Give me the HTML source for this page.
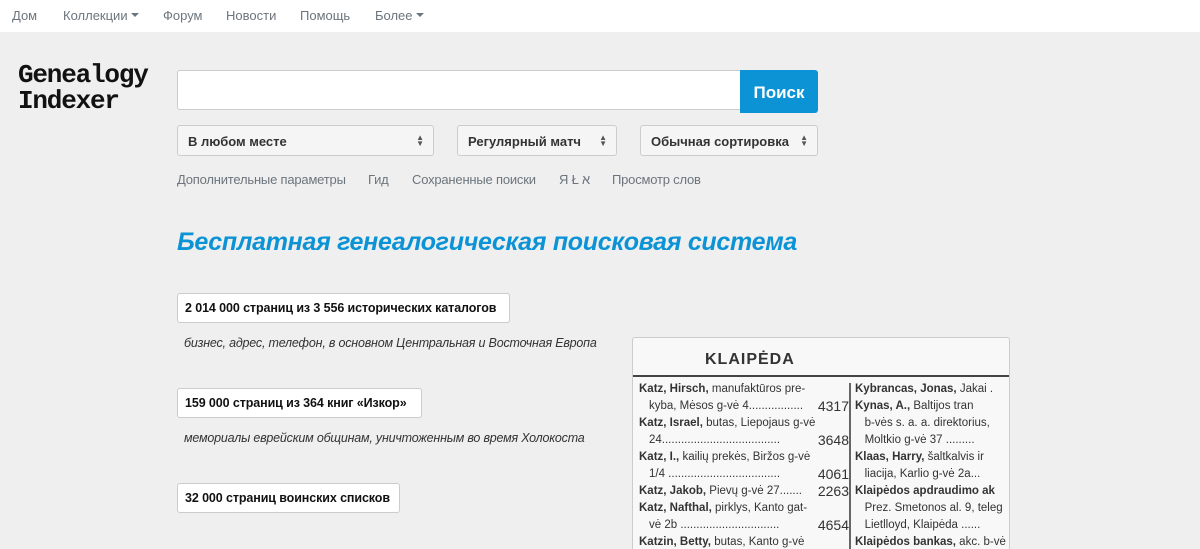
<!DOCTYPE html>
<html><head><meta charset="utf-8"><style>
*{box-sizing:border-box;margin:0;padding:0}
html,body{width:1200px;height:549px;overflow:hidden}
body{background:#efefef;font-family:"Liberation Sans",sans-serif;position:relative}
.nav{position:absolute;left:0;top:0;width:1200px;height:32px;background:#fff}
.nav span{position:absolute;top:8px;font-size:13px;color:#6c757d}
.car{display:inline-block;width:0;height:0;border-left:4px solid transparent;border-right:4px solid transparent;border-top:4px solid #6c757d;vertical-align:3px;margin-left:3px}
.logo{position:absolute;left:18px;top:62px;font-family:"Liberation Mono",monospace;font-size:26px;line-height:26px;color:#111;font-weight:bold;letter-spacing:-1.2px}
.search{position:absolute;left:177px;top:70px;width:564px;height:40px;background:#fff;border:1px solid #ccc;border-radius:3px 0 0 3px}
.btn{position:absolute;left:740px;top:70px;width:78px;height:43px;background:#0b93d5;color:#fff;font-weight:bold;font-size:17px;text-align:center;line-height:46px;border-radius:0 3px 3px 0}
.sel{position:absolute;top:125px;height:31px;border:1px solid #ccc;border-radius:3px;background:#f5f5f5;font-size:13px;font-weight:bold;color:#333;padding:8px 10px}
.sel i{position:absolute;right:9px;top:9px;font-style:normal;font-size:8px;line-height:6px;color:#555}
.links span{position:absolute;top:172px;font-size:13px;color:#6c757d;letter-spacing:-0.2px}
h1{position:absolute;left:177px;top:228px;font-size:25px;font-style:italic;font-weight:bold;color:#0b93d5;letter-spacing:-0.3px}
.b{position:absolute;left:177px;height:30px;background:#fff;border:1px solid #ccc;border-radius:3px;font-size:12.5px;font-weight:bold;color:#111;padding:7px 7px;white-space:nowrap;letter-spacing:-0.1px}
.d{position:absolute;left:184px;font-size:12.5px;font-style:italic;color:#333;letter-spacing:-0.2px}
.img{position:absolute;left:632px;top:337px;width:378px;height:212px;background:#f8f8f8;border:1px solid #ccc;border-bottom:none;border-radius:3px 3px 0 0;overflow:hidden;font-size:11.5px;color:#333;line-height:17px}
.img .t{position:absolute;left:72px;top:13px;font-weight:bold;font-size:16px;letter-spacing:1px;color:#333}
.img .hr{position:absolute;left:0;top:37px;width:378px;height:2px;background:#444}
.img .c1{position:absolute;left:6px;top:43px;width:210px;white-space:nowrap;overflow:hidden}
.img .c2{position:absolute;left:222px;top:43px;white-space:nowrap}
.img .vl{position:absolute;left:216px;top:45px;width:2px;height:180px;background:#666}
.img .c1 div,.img .c2 div{height:17px;overflow:hidden}
.img .r{display:flex;justify-content:space-between;padding-left:10px}
.img .r em{font-style:normal;font-size:14px;line-height:17px}
</style></head><body>
<div class="nav">
<span style="left:12px">Дом</span>
<span style="left:63px">Коллекции<b class="car"></b></span>
<span style="left:163px">Форум</span>
<span style="left:226px">Новости</span>
<span style="left:300px">Помощь</span>
<span style="left:375px">Более<b class="car"></b></span>
</div>
<div class="logo">Genealogy<br>Indexer</div>
<div class="search"></div>
<div class="btn">Поиск</div>
<div class="sel" style="left:177px;width:257px">В любом месте<i>▲<br>▼</i></div>
<div class="sel" style="left:457px;width:160px">Регулярный матч<i>▲<br>▼</i></div>
<div class="sel" style="left:640px;width:178px">Обычная сортировка<i>▲<br>▼</i></div>
<div class="links">
<span style="left:177px">Дополнительные параметры</span>
<span style="left:368px">Гид</span>
<span style="left:412px">Сохраненные поиски</span>
<span style="left:559px">Я Ł א</span>
<span style="left:612px">Просмотр слов</span>
</div>
<h1>Бесплатная генеалогическая поисковая система</h1>
<div class="b" style="top:293px;width:333px">2 014 000 страниц из 3 556 исторических каталогов</div>
<div class="d" style="top:336px">бизнес, адрес, телефон, в основном Центральная и Восточная Европа</div>
<div class="b" style="top:388px;width:245px">159 000 страниц из 364 книг «Изкор»</div>
<div class="d" style="top:431px">мемориалы еврейским общинам, уничтоженным во время Холокоста</div>
<div class="b" style="top:483px;width:223px">32 000 страниц воинских списков</div>
<div class="img">
<div class="t">KLAIPĖDA</div><div class="hr"></div><div class="vl"></div>
<div class="c1">
<div><b>Katz, Hirsch,</b> manufaktūros pre-</div>
<div class="r"><span>kyba, Mėsos g-vė 4.................</span><em>4317</em></div>
<div><b>Katz, Israel,</b> butas, Liepojaus g-vė</div>
<div class="r"><span>24.....................................</span><em>3648</em></div>
<div><b>Katz, I.,</b> kailių prekės, Biržos g-vė</div>
<div class="r"><span>1/4 ...................................</span><em>4061</em></div>
<div class="r" style="padding:0"><span><b>Katz, Jakob,</b> Pievų g-vė 27.......</span><em>2263</em></div>
<div><b>Katz, Nafthal,</b> pirklys, Kanto gat-</div>
<div class="r"><span>vė 2b ...............................</span><em>4654</em></div>
<div><b>Katzin, Betty,</b> butas, Kanto g-vė</div>
<div class="r"><span>28.....................................</span><em>3638</em></div>
<div><b>Katzke, Gustav,</b> šaltkalvis ir svar-</div>
</div>
<div class="c2">
<div><b>Kybrancas, Jonas,</b> Jakai .</div>
<div><b>Kynas, A.,</b> Baltijos tran</div>
<div>&nbsp;&nbsp;&nbsp;b-vės s. a. a. direktorius,</div>
<div>&nbsp;&nbsp;&nbsp;Moltkio g-vė 37 .........</div>
<div><b>Klaas, Harry,</b> šaltkalvis ir</div>
<div>&nbsp;&nbsp;&nbsp;liacija, Karlio g-vė 2a...</div>
<div><b>Klaipėdos apdraudimo ak</b></div>
<div>&nbsp;&nbsp;&nbsp;Prez. Smetonos al. 9, teleg</div>
<div>&nbsp;&nbsp;&nbsp;Lietlloyd, Klaipėda ......</div>
<div><b>Klaipėdos bankas,</b> akc. b-vė</div>
<div>&nbsp;&nbsp;&nbsp;gaus g-vė 44/45, (4 laidai)</div>
<div>&nbsp;&nbsp;&nbsp;adr.: Memelbank, Klaipėda</div>
</div>
</div>
</body></html>
